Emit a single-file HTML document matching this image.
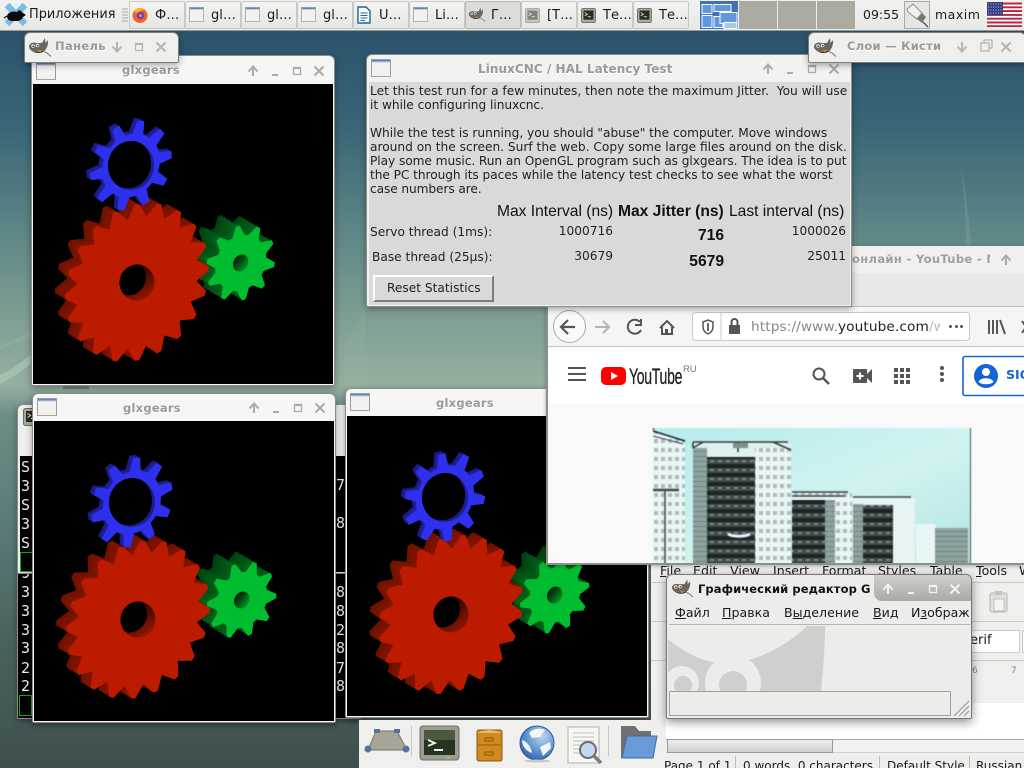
<!DOCTYPE html>
<html><head><meta charset="utf-8"><title>Desktop</title>
<style>
html,body{margin:0;padding:0}
body{width:1024px;height:768px;overflow:hidden;position:relative;font-family:"DejaVu Sans","Noto Sans CJK SC",sans-serif;font-size:12px;color:#1a1a1a;
background:linear-gradient(180deg,#27485f 0,#2c556d 40px,#3a6677 130px,#5d8686 230px,#7f9f94 320px,#95b09f 385px,#6b8e88 415px,#5a7c78 520px,#49625f 640px,#3e504d 768px)}
div,svg,span{position:absolute;box-sizing:border-box}
span{white-space:pre}
.win{background:#efefed;border:1px solid #8d8d8a;border-radius:6px 6px 2px 2px;box-shadow:0 2px 7px rgba(0,0,0,.35)}
.ttl{font-weight:bold;color:#9a9a98;font-size:11.5px;line-height:14px;letter-spacing:.25px;text-shadow:0 1px 0 #fff}
.cv{background:#000}
.task{top:1px;height:28px;width:56px;background:linear-gradient(#f4f4f2,#e6e6e3);border:1px solid #c8c8c4;border-radius:2px;font-size:13px;line-height:28px}
.task span{left:25px;top:0}
.m{font-size:12.6px;top:0;line-height:16px}
.mono{font-family:"DejaVu Sans Mono","Liberation Mono",monospace;color:#eee;font-size:15px;line-height:16px}
.lt{font-size:12.2px;line-height:14px;color:#222}
.hh{font-family:"Liberation Sans",sans-serif;font-size:15.6px;color:#111;line-height:18px}
u{text-decoration:underline}
.dot{width:3.4px;height:3.4px;border-radius:50%;background:#555;top:79px}
</style></head><body>

<svg style="width:0;height:0;left:0;top:0" viewBox="0 0 1 1">
<defs>
<g id="rf"><circle r="70"/>
<polygon id="rt" points="68.8,-10.9 83,-2.6 83,2.6 68.8,10.9"/>
<use href="#rt" transform="rotate(18)"/><use href="#rt" transform="rotate(36)"/><use href="#rt" transform="rotate(54)"/><use href="#rt" transform="rotate(72)"/><use href="#rt" transform="rotate(90)"/><use href="#rt" transform="rotate(108)"/><use href="#rt" transform="rotate(126)"/><use href="#rt" transform="rotate(144)"/><use href="#rt" transform="rotate(162)"/><use href="#rt" transform="rotate(180)"/><use href="#rt" transform="rotate(198)"/><use href="#rt" transform="rotate(216)"/><use href="#rt" transform="rotate(234)"/><use href="#rt" transform="rotate(252)"/><use href="#rt" transform="rotate(270)"/><use href="#rt" transform="rotate(288)"/><use href="#rt" transform="rotate(306)"/><use href="#rt" transform="rotate(324)"/><use href="#rt" transform="rotate(342)"/>
</g>
<g id="gf"><circle r="29.5"/>
<polygon id="gt" points="28.5,-7.1 40,-2.4 40,2.4 28.5,7.1"/>
<use href="#gt" transform="rotate(36)"/><use href="#gt" transform="rotate(72)"/><use href="#gt" transform="rotate(108)"/><use href="#gt" transform="rotate(144)"/><use href="#gt" transform="rotate(180)"/><use href="#gt" transform="rotate(216)"/><use href="#gt" transform="rotate(252)"/><use href="#gt" transform="rotate(288)"/><use href="#gt" transform="rotate(324)"/>
</g>
<g id="bf"><circle r="33.5"/>
<polygon id="bt" points="32.7,-6.4 47,-4 47,4 32.7,6.4"/>
<use href="#bt" transform="rotate(36)"/><use href="#bt" transform="rotate(72)"/><use href="#bt" transform="rotate(108)"/><use href="#bt" transform="rotate(144)"/><use href="#bt" transform="rotate(180)"/><use href="#bt" transform="rotate(216)"/><use href="#bt" transform="rotate(252)"/><use href="#bt" transform="rotate(288)"/><use href="#bt" transform="rotate(324)"/>
</g>
<linearGradient id="rw" x1="0" y1="0" x2="1" y2="1"><stop offset=".2" stop-color="#200400"/><stop offset="1" stop-color="#a81a00"/></linearGradient>
<linearGradient id="gw" x1="0" y1="0" x2="1" y2="1"><stop offset=".15" stop-color="#001a06"/><stop offset="1" stop-color="#00a82a"/></linearGradient>
<clipPath id="rc"><ellipse rx="17.5" ry="18" transform="translate(104,198.5) rotate(14)"/></clipPath>
<clipPath id="gc"><circle r="8.9" transform="translate(207.7,179) matrix(.866 -.171 0 .94 0 0)"/></clipPath>
<clipPath id="bc"><ellipse rx="23" ry="24.500" transform="translate(98,81.5) rotate(6)"/></clipPath>
<g id="gh"><circle r="8.9" fill="url(#gw)" transform="translate(207.7,179) matrix(.866 -.171 0 .94 0 0)"/>
<g clip-path="url(#gc)"><circle r="8.9" fill="#000" transform="translate(194,171) matrix(.866 -.171 0 .94 0 0)"/></g></g>
<g id="rh"><ellipse rx="17.5" ry="18" fill="url(#rw)" transform="translate(104,198.5) rotate(14)"/>
<g clip-path="url(#rc)"><ellipse rx="17.5" ry="18" fill="#000" transform="translate(95.5,193.400) rotate(14)"/></g></g>
<g id="bh"><ellipse rx="23" ry="24.500" fill="#1d1d8e" transform="translate(98,81.5) rotate(6)"/>
<g clip-path="url(#bc)"><ellipse rx="23" ry="24.500" fill="#000" transform="translate(95,79.800) rotate(6)"/></g></g>

<g id="r1" transform="translate(104,198.5) matrix(.866 -.171 0 .94 0 0) rotate(0)"><use href="#rf"/></g>
<g id="g1" transform="translate(207.7,179) matrix(.866 -.171 0 .94 0 0) rotate(13)"><use href="#gf"/></g>
<g id="b1" transform="translate(98,81.5) matrix(.866 -.171 0 .94 0 0) rotate(-3.8)"><use href="#bf"/></g>
<g id="r2" transform="translate(104,198.5) matrix(.866 -.171 0 .94 0 0) rotate(3.7)"><use href="#rf"/></g>
<g id="g2" transform="translate(207.7,179) matrix(.866 -.171 0 .94 0 0) rotate(4.3)"><use href="#gf"/></g>
<g id="b2" transform="translate(98,81.5) matrix(.866 -.171 0 .94 0 0) rotate(-11.4)"><use href="#bf"/></g>
<g id="r3" transform="translate(104,198.5) matrix(.866 -.171 0 .94 0 0) rotate(10)"><use href="#rf"/></g>
<g id="g3" transform="translate(207.7,179) matrix(.866 -.171 0 .94 0 0) rotate(-5)"><use href="#gf"/></g>
<g id="b3" transform="translate(98,81.5) matrix(.866 -.171 0 .94 0 0) rotate(13.6)"><use href="#bf"/></g>

<symbol id="wi" viewBox="0 0 20 20" preserveAspectRatio="none"><rect x=".5" y=".5" width="19" height="19" fill="#f1f1ef" stroke="#9c9c9a"/><rect x="1" y="1" width="18" height="2" fill="#5b86c4"/><rect x="1" y="3" width="18" height="1" fill="#c9d6e8"/></symbol>
<symbol id="gimp" viewBox="0 0 24 20"><path d="M1 10 C1 6 5 5 9 6 L14 6 L17 1 L17.500 6 L20 3 C20.500 9 18 14 14 15 C9 16 2 15 1 10Z" fill="#6b675e"/><path d="M3 13 C7 16 13 16 17 12 L15 15 C11 17 6 16 3 13Z" fill="#2e2b27"/><circle cx="5" cy="9" r="1.700" fill="#eee"/><circle cx="9.500" cy="8.500" r="1.800" fill="#eee"/><circle cx="5.200" cy="9.200" r=".8" fill="#222"/><circle cx="9.700" cy="8.700" r=".8" fill="#222"/><path d="M9 13 L15 13 L12 15.500Z" fill="#c98a30"/><path d="M15 14 L19 16 L23 19.500" fill="none" stroke="#888" stroke-width="1.200"/></symbol>
<symbol id="tm" viewBox="0 0 18 18"><rect x=".5" y=".5" width="17" height="17" rx="2" fill="#a9aaa2" stroke="#6b6c66"/><rect x="3" y="3" width="12" height="11" fill="#23301c"/><path d="M4.5 5.5 L7.5 7.5 L4.5 9.5" fill="none" stroke="#e8e8e8"/><rect x="8" y="10" width="4" height="1" fill="#e8e8e8"/></symbol>

<g id="up"><path d="M-4.5 0.5 L0 -4.5 L4.5 0.5 M0 -4 V5" fill="none" stroke="currentColor" stroke-width="2"/></g>
<g id="dn"><path d="M-4.5 -0.5 L0 4.5 L4.5 -0.5 M0 4 V-5" fill="none" stroke="currentColor" stroke-width="2"/></g>
<g id="mn"><rect x="-3" y="3" width="6" height="2" fill="currentColor"/></g>
<g id="mx"><rect x="-3.5" y="-3.5" width="7" height="7" fill="none" stroke="currentColor" stroke-width="1.3"/><rect x="-3.5" y="-3.5" width="7" height="1.6" fill="currentColor"/></g>
<g id="cl"><path d="M-4.5 -4.5 L4.5 4.5 M4.5 -4.5 L-4.5 4.5" stroke="currentColor" stroke-width="2"/></g>

<pattern id="dkw" width="8" height="9" patternUnits="userSpaceOnUse"><rect width="8" height="9" fill="#414c4b"/><rect width="8" height="4" fill="#1c2322"/><rect x="1" y="5" width="4" height="2" fill="#7b8582"/></pattern>
<pattern id="ltw" width="7" height="9" patternUnits="userSpaceOnUse"><rect width="7" height="9" fill="#e9f6f5"/><rect x="1" y="2" width="4" height="4" fill="#a9bdbb"/></pattern>
<pattern id="gyw" width="8" height="5" patternUnits="userSpaceOnUse"><rect width="8" height="5" fill="#8ea3a0"/><rect y="3" width="8" height="1" fill="#71827f"/></pattern>
<radialGradient id="gl" cx=".65" cy=".3" r=".8"><stop offset="0" stop-color="#bcd6f0"/><stop offset=".6" stop-color="#5a90d0"/><stop offset="1" stop-color="#2f5ea5"/></radialGradient>
</defs></svg>

<!-- wallpaper streaks -->
<svg style="left:0;top:0;width:1024px;height:768px" viewBox="0 0 1024 768">
<path d="M0 375 C15 368 24 360 34 352 L34 362 C24 370 12 378 0 384Z" fill="#b3cdbb" opacity=".55"/>
<path d="M0 345 C12 340 24 336 34 330 L34 335 C22 341 10 346 0 350Z" fill="#a9c6b6" opacity=".2"/>
<path d="M960 160 C964 190 966 220 966 246 L971 246 C969 220 966 190 960 160Z" fill="#a4c0b4" opacity=".2"/>
<rect x="63" y="386" width="26" height="3" fill="#555" opacity=".5"/>
<path d="M345 390 L345 345 L366 306 L366 390Z" fill="#a9c2ab" opacity=".1"/>
</svg>

<!-- terminals -->
<div class="win" style="left:17px;top:404px;width:345px;height:170px;background:#eeeeec">
<svg style="left:5px;top:3px;width:18px;height:18px"><use href="#tm" width="18" height="18"/></svg>
<div style="left:2px;top:51px;width:340px;height:116px;background:#000"></div>
<div style="left:2px;top:147px;width:13px;height:20px;border:1px solid #13a81f"></div>
<span class="mono" style="left:3px;top:54px">S</span><span class="mono" style="left:3px;top:73px">3</span><span class="mono" style="left:3px;top:92px">S</span><span class="mono" style="left:3px;top:111px">3</span><span class="mono" style="left:3px;top:130px">S</span>
<span class="mono" style="left:318px;top:72px">7</span><span class="mono" style="left:318px;top:110px">8</span>
</div>
<div class="win" style="left:17px;top:574px;width:345px;height:145px;background:#000;border-top:0;overflow:hidden;border-radius:0 0 2px 2px">
<div style="left:1px;top:121px;width:13px;height:21px;border:1px solid #13a81f"></div>
<span class="mono" style="left:3px;top:-9px">9</span><span class="mono" style="left:3px;top:10px">3</span><span class="mono" style="left:3px;top:29px">3</span><span class="mono" style="left:3px;top:48px">3</span><span class="mono" style="left:3px;top:66px">3</span><span class="mono" style="left:3px;top:86px">2</span><span class="mono" style="left:3px;top:104px">2</span>
<span class="mono" style="left:318px;top:10px">8</span><span class="mono" style="left:318px;top:29px">8</span><span class="mono" style="left:318px;top:48px">2</span><span class="mono" style="left:318px;top:66px">8</span><span class="mono" style="left:318px;top:86px">7</span><span class="mono" style="left:318px;top:104px">8</span>
</div>

<!-- glxgears 1 -->
<div class="win" style="left:31px;top:55px;width:304px;height:331px;background:#f6f6f4">
<svg style="left:4px;top:6px;width:20px;height:18px"><use href="#wi" width="20" height="18"/></svg>
<span class="ttl" style="left:90px;top:7px">glxgears</span>
<svg style="left:0;top:0;width:304px;height:29px;color:#aaa"><use href="#up" x="221" y="15"/><use href="#mn" x="243" y="15"/><use href="#mx" x="265" y="15"/><use href="#cl" x="287" y="15"/></svg>
<svg class="cv" style="left:1px;top:28px;width:300px;height:300px" viewBox="0 0 300 300">
<use href="#g1" x="-17.8" y="-10.5" fill="#004210"/><use href="#g1" x="-15" y="-8.9" fill="#004a12"/><use href="#g1" x="-12" y="-7.1" fill="#004f13"/><use href="#g1" x="-9" y="-5.3" fill="#005415"/><use href="#g1" x="-6" y="-3.5" fill="#005a16"/><use href="#g1" x="-3" y="-1.8" fill="#006018"/><use href="#g1" fill="#00bd2f"/><use href="#gh"/>
<use href="#r1" x="-10" y="-5.9" fill="#701100"/><use href="#r1" x="-7.500" y="-4.4" fill="#761200"/><use href="#r1" x="-5" y="-3" fill="#7c1200"/><use href="#r1" x="-2.500" y="-1.500" fill="#801300"/><use href="#r1" fill="#bd1b00"/><use href="#rh"/>
<use href="#b1" x="-4" y="-2.400" fill="#1b1b86"/><use href="#b1" x="-2" y="-1.200" fill="#1f1f96"/><use href="#b1" fill="#2f2fee"/><use href="#bh"/>
</svg></div>

<!-- glxgears 3 -->
<div class="win" style="left:345px;top:388px;width:304px;height:330px;background:#f6f6f4">
<svg style="left:4px;top:4px;width:20px;height:18px"><use href="#wi" width="20" height="18"/></svg>
<span class="ttl" style="left:90px;top:7px">glxgears</span>
<svg class="cv" style="left:1px;top:27px;width:300px;height:300px" viewBox="0 0 300 300">
<use href="#g3" x="-17.8" y="-10.5" fill="#004210"/><use href="#g3" x="-15" y="-8.9" fill="#004a12"/><use href="#g3" x="-12" y="-7.1" fill="#004f13"/><use href="#g3" x="-9" y="-5.3" fill="#005415"/><use href="#g3" x="-6" y="-3.5" fill="#005a16"/><use href="#g3" x="-3" y="-1.8" fill="#006018"/><use href="#g3" fill="#00bd2f"/><use href="#gh"/>
<use href="#r3" x="-10" y="-5.9" fill="#701100"/><use href="#r3" x="-7.500" y="-4.4" fill="#761200"/><use href="#r3" x="-5" y="-3" fill="#7c1200"/><use href="#r3" x="-2.500" y="-1.500" fill="#801300"/><use href="#r3" fill="#bd1b00"/><use href="#rh"/>
<use href="#b3" x="-4" y="-2.400" fill="#1b1b86"/><use href="#b3" x="-2" y="-1.200" fill="#1f1f96"/><use href="#b3" fill="#2f2fee"/><use href="#bh"/>
</svg></div>

<!-- glxgears 2 -->
<div class="win" style="left:32px;top:393px;width:304px;height:330px;background:#f6f6f4">
<svg style="left:4px;top:4px;width:20px;height:18px"><use href="#wi" width="20" height="18"/></svg>
<span class="ttl" style="left:90px;top:7px">glxgears</span>
<svg style="left:0;top:0;width:304px;height:29px;color:#aaa"><use href="#up" x="221" y="14"/><use href="#mn" x="243" y="14"/><use href="#mx" x="265" y="14"/><use href="#cl" x="287" y="14"/></svg>
<svg class="cv" style="left:1px;top:27px;width:300px;height:300px" viewBox="0 0 300 300">
<use href="#g2" x="-17.8" y="-10.5" fill="#004210"/><use href="#g2" x="-15" y="-8.9" fill="#004a12"/><use href="#g2" x="-12" y="-7.1" fill="#004f13"/><use href="#g2" x="-9" y="-5.3" fill="#005415"/><use href="#g2" x="-6" y="-3.5" fill="#005a16"/><use href="#g2" x="-3" y="-1.8" fill="#006018"/><use href="#g2" fill="#00bd2f"/><use href="#gh"/>
<use href="#r2" x="-10" y="-5.9" fill="#701100"/><use href="#r2" x="-7.500" y="-4.4" fill="#761200"/><use href="#r2" x="-5" y="-3" fill="#7c1200"/><use href="#r2" x="-2.500" y="-1.500" fill="#801300"/><use href="#r2" fill="#bd1b00"/><use href="#rh"/>
<use href="#b2" x="-4" y="-2.400" fill="#1b1b86"/><use href="#b2" x="-2" y="-1.200" fill="#1f1f96"/><use href="#b2" fill="#2f2fee"/><use href="#bh"/>
</svg></div>

<!-- LibreOffice -->
<div style="left:651px;top:560px;width:373px;height:208px;background:#efefed;overflow:hidden">
<span class="m" style="left:9px;top:3px"><u>F</u>ile</span><span class="m" style="left:42px;top:3px">Edit</span><span class="m" style="left:79px;top:3px">View</span><span class="m" style="left:122px;top:3px">Insert</span><span class="m" style="left:171px;top:3px">Format</span><span class="m" style="left:227px;top:3px">Styles</span><span class="m" style="left:279px;top:3px">Table</span><span class="m" style="left:325px;top:3px"><u>T</u>ools</span><span class="m" style="left:368px;top:3px">W</span>
<div style="left:0;top:22px;width:373px;height:1px;background:#c9c9c6"></div>
<div style="left:0;top:61px;width:373px;height:1px;background:#c9c9c6"></div>
<div style="left:0;top:100px;width:373px;height:1px;background:#c9c9c6"></div>
<div style="left:311px;top:70px;width:58px;height:23px;background:#fff;border:1px solid #ccc"></div>
<div style="left:371px;top:70px;width:10px;height:23px;background:#f6f6f4;border:1px solid #ccc"></div>
<span class="m" style="left:319px;top:73px;font-size:13px">erif</span>
<svg style="left:337px;top:30px;width:30px;height:24px" viewBox="0 0 30 24"><rect x="2" y="3" width="17" height="19" rx="2" fill="#dfdfdc" stroke="#b5b5b2"/><rect x="7" y="1" width="7" height="4" fill="#c4c4c0"/><rect x="6" y="9" width="10" height="12" fill="#f4f4f2" stroke="#c0c0bd"/></svg>
<div style="left:0;top:101px;width:373px;height:42px;background:#efefed"></div>
<span style="left:321px;top:106px;font-size:9px;color:#888">6</span><span style="left:360px;top:106px;font-size:9px;color:#888">7</span>
<div style="left:15px;top:143px;width:358px;height:36px;background:#fff"></div>
<div style="left:15px;top:179px;width:358px;height:14px;background:#f1f1ef;border-top:1px solid #a8a8a5;border-bottom:1px solid #cfcfcc"></div>
<div style="left:16px;top:179px;width:166px;height:14px;background:linear-gradient(#eee,#cfcfcc);border:1px solid #999"></div>
<div style="left:0;top:195px;width:373px;height:13px;background:#eeeeec"></div>
<span class="m" style="left:13px;top:198px;font-size:12px">Page 1 of 1</span><span class="m" style="left:92px;top:198px;font-size:12px">0 words, 0 characters</span><span class="m" style="left:236px;top:198px;font-size:12px">Default Style</span><span class="m" style="left:325px;top:198px;font-size:12px">Russian</span>
<div style="left:84px;top:196px;width:1px;height:12px;background:#bbb"></div><div style="left:228px;top:196px;width:1px;height:12px;background:#bbb"></div><div style="left:318px;top:196px;width:1px;height:12px;background:#bbb"></div>
</div>

<!-- Firefox -->
<div style="left:546px;top:246px;width:478px;height:319px;background:#f9f9f9;border-left:2px solid #8d8d8a;border-bottom:2px solid #8d8d8a;overflow:hidden;box-shadow:0 1px 4px rgba(0,0,0,.3)">
<div style="left:0;top:0;width:478px;height:27px;background:#f0f0ee"></div>
<span class="ttl" style="left:304px;top:6px;color:#a0a09e;font-size:11.5px;letter-spacing:.35px;width:138px;overflow:hidden;display:block;text-shadow:none">онлайн - YouTube - Mozilla</span>
<svg style="left:450px;top:6px;width:16px;height:16px;color:#aaa"><use href="#up" x="8" y="8"/></svg>
<div style="left:0;top:27px;width:478px;height:33px;background:#e8e8e7"></div>
<div style="left:0;top:60px;width:478px;height:1px;background:#bdbdbb"></div>
<div style="left:0;top:61px;width:478px;height:40px;background:#f5f5f5;border-bottom:1px solid #c7c7c7"></div>
<div style="left:5px;top:64px;width:33px;height:33px;border:1px solid #aaa;border-radius:50%;background:#fafafa"></div>
<svg style="left:0;top:61px;width:478px;height:40px" viewBox="0 0 478 40" fill="none" stroke="#555" stroke-width="2">
<path d="M13 20 H27 M20 13 L13 20 L20 27" stroke-width="2.2"/>
<path d="M47 20 H61 M55 14 L61 20 L55 26" stroke="#b5b5b5" stroke-width="2"/>
<path d="M92 15 A7 7 0 1 0 93 23 M93 12 V18 H87"/>
<path d="M112 21 L119 14 L126 21 M114 20 V27 H124 V20" stroke-width="2"/><rect x="117" y="22" width="3" height="5" fill="#555" stroke="none"/>
<rect x="144.5" y="5.5" width="277" height="28" rx="3" fill="#fff" stroke="#c9c9c9" stroke-width="1"/>
<path d="M155 15 L160 13 L165 15 V20 C165 24 162 26 160 27 C158 26 155 24 155 20Z" stroke-width="1.5"/><path d="M160 16 V24" stroke-width="1.8"/>
<path d="M173 6 V33" stroke="#ccc" stroke-width="1"/>
<rect x="181" y="18" width="11" height="9" fill="#555" stroke="none"/><path d="M183.5 18 V15 A3 3 0 0 1 189.5 15 V18"/>
<path d="M441 13 V27 M445 13 V27 M449 13 V27 M452 13 L457 27"/>
<path d="M474 14 L482 26 M482 14 L474 26"/>
</svg>
<span style="left:203px;top:71px;font-size:13.7px;line-height:20px;color:#888;letter-spacing:.1px">https://www.<b style="font-weight:normal;color:#222">youtube.com</b><b style="font-weight:normal;color:#bbb">/w</b></span>
<div style="left:392px;top:68px;width:26px;height:24px;background:#fff"></div>
<div class="dot" style="left:401px"></div><div class="dot" style="left:406.500px"></div><div class="dot" style="left:412px"></div>
<div style="left:0;top:102px;width:478px;height:56px;background:#fff"></div>
<svg style="left:0;top:102px;width:478px;height:56px" viewBox="0 0 478 56">
<path d="M20 20 H38 M20 26 H38 M20 32 H38" stroke="#555" stroke-width="2"/>
<rect x="53" y="19" width="25" height="18" rx="5" fill="#f00"/><path d="M63 24 L70 28 L63 32Z" fill="#fff"/>
<circle cx="271" cy="26" r="5.5" fill="none" stroke="#555" stroke-width="2"/><path d="M275 30 L281 36" stroke="#555" stroke-width="2.4"/>
<rect x="305" y="21" width="14" height="14" rx="1" fill="#555"/><path d="M319 26 L324 21 V35 L319 30Z" fill="#555"/><path d="M312 24.5 V31.5 M308.5 28 H315.5" stroke="#fff" stroke-width="2"/>
<path d="M346 20h4v4h-4zM352 20h4v4h-4zM358 20h4v4h-4zM346 26h4v4h-4zM352 26h4v4h-4zM358 26h4v4h-4zM346 32h4v4h-4zM352 32h4v4h-4zM358 32h4v4h-4z" fill="#555"/>
<circle cx="394" cy="20" r="2" fill="#555"/><circle cx="394" cy="26" r="2" fill="#555"/><circle cx="394" cy="32" r="2" fill="#555"/>
<rect x="415" y="8.5" width="80" height="39" rx="2" fill="#fff" stroke="#1266d4" stroke-width="1.6"/>
<circle cx="438" cy="28" r="12" fill="#1266d4"/><circle cx="438" cy="24" r="4" fill="#fff"/><path d="M430.500 34 C432 29 444 29 445.500 34 C442 37 434 37 430.500 34Z" fill="#fff"/>
</svg>
<span style="left:81px;top:118px;font-family:'Liberation Sans',sans-serif;font-size:22px;line-height:26px;color:#222;letter-spacing:-.5px;transform:scaleX(.64);transform-origin:0 0;-webkit-text-stroke:.3px #222">YouTube</span>
<span style="left:135px;top:118px;font-family:'Liberation Sans',sans-serif;font-size:9.5px;line-height:12px;color:#777">RU</span>
<span style="left:458px;top:121px;font-size:12.5px;line-height:16px;color:#1266d4;font-weight:bold">SIG</span>
<svg style="left:105px;top:182px;width:318px;height:136px;filter:blur(.5px)" viewBox="0 0 318 136">
<defs><linearGradient id="sk" x1="0" y1="0" x2="1" y2="1"><stop offset="0" stop-color="#b7ecec"/><stop offset=".55" stop-color="#d0f3f1"/><stop offset="1" stop-color="#b4e4e2"/></linearGradient></defs>
<rect width="318" height="136" fill="url(#sk)"/>
<rect x="0" y="0" width="1" height="136" fill="#223"/><rect x="317" y="0" width="1" height="136" fill="#3a5a5a"/>
<path d="M0 2 L32 12 V136 H0Z" fill="url(#ltw)"/><path d="M0 3 L32 13" stroke="#123" stroke-width="1.5"/><path d="M0 8 L30 16" stroke="#345"/>
<path d="M0 62 H26" stroke="#3c4a49" stroke-width="2.5"/><path d="M12 62 V136" stroke="#3c4a49" stroke-width="1.5"/>
<rect x="40" y="14" width="98" height="122" fill="#dff0ef"/>
<rect x="40" y="20" width="14" height="116" fill="url(#gyw)"/>
<rect x="54" y="29" width="48" height="107" fill="url(#dkw)"/>
<rect x="102" y="20" width="36" height="116" fill="url(#ltw)"/>
<path d="M40 14 H135 M40 14 V20 M85 14 V24 M120 14 L138 22 M50 14 L40 20" stroke="#2e3b3a" stroke-width="1.6" fill="none"/>
<rect x="80" y="15" width="15" height="5" fill="#7f8f8d"/>
<rect x="139" y="65" width="60" height="71" fill="url(#ltw)"/>
<rect x="139" y="72" width="33" height="64" fill="url(#dkw)"/><rect x="172" y="72" width="10" height="64" fill="url(#gyw)"/>
<path d="M139 64 H195 M139 68 H192" stroke="#3a4746" stroke-width="1.5"/>
<rect x="200" y="70" width="62" height="66" fill="#e6f4f3"/>
<rect x="200" y="76" width="10" height="60" fill="url(#gyw)"/><rect x="210" y="77" width="30" height="59" fill="url(#dkw)"/>
<path d="M200 69 H258" stroke="#3a4746" stroke-width="1.6"/>
<rect x="263" y="96" width="20" height="40" fill="#e8f6f5"/><rect x="282" y="100" width="33" height="36" fill="url(#gyw)"/>
<path d="M75 106 C80 109 92 109 97 106" stroke="#eef" stroke-width="3" fill="none"/>
</svg>
</div>

<!-- Latency window -->
<div class="win" style="left:366px;top:54px;width:486px;height:253px;background:#f2f2f0">
<svg style="left:4px;top:4px;width:20px;height:18px"><use href="#wi" width="20" height="18"/></svg>
<span class="ttl" style="left:111px;top:7px;font-size:12px;letter-spacing:.05px">LinuxCNC / HAL Latency Test</span>
<svg style="left:0;top:0;width:484px;height:28px;color:#aaa"><use href="#up" x="401" y="14"/><use href="#mn" x="423" y="14"/><use href="#mx" x="445" y="14"/><use href="#cl" x="467" y="14"/></svg>
<div style="left:2px;top:27px;width:481px;height:223px;background:#d9d9d9"></div>
<span class="lt" style="left:3px;top:29px">Let this test run for a few minutes, then note the maximum Jitter.  You will use</span>
<span class="lt" style="left:3px;top:43px;letter-spacing:-.03px">it while configuring linuxcnc.</span>
<span class="lt" style="left:3px;top:71px;letter-spacing:-.015px">While the test is running, you should "abuse" the computer. Move windows</span>
<span class="lt" style="left:3px;top:85px">around on the screen. Surf the web. Copy some large files around on the disk.</span>
<span class="lt" style="left:3px;top:99px;letter-spacing:-.07px">Play some music. Run an OpenGL program such as glxgears. The idea is to put</span>
<span class="lt" style="left:3px;top:113px;letter-spacing:-.065px">the PC through its paces while the latency test checks to see what the worst</span>
<span class="lt" style="left:3px;top:127px;letter-spacing:-.1px">case numbers are.</span>
<span class="hh" style="left:130px;top:148px">Max Interval (ns)</span>
<span class="hh" style="left:251px;top:148px;font-weight:bold">Max Jitter (ns)</span>
<span class="hh" style="left:362px;top:148px">Last interval (ns)</span>
<span class="lt" style="left:3px;top:170px">Servo thread (1ms):</span>
<span class="lt" style="left:5px;top:195px">Base thread (25µs):</span>
<span class="lt" style="right:238px;top:169px">1000716</span><span class="lt" style="right:238px;top:194px">30679</span>
<span class="lt" style="right:5px;top:169px">1000026</span><span class="lt" style="right:5px;top:194px">25011</span>
<span class="hh" style="right:127px;top:172px;font-weight:bold">716</span><span class="hh" style="right:127px;top:198px;font-weight:bold">5679</span>
<div style="left:6px;top:220px;width:121px;height:27px;background:#d9d9d9;border:2px solid;border-color:#fff #7d7d7d #7d7d7d #fff"></div>
<span class="lt" style="left:20px;top:226px">Reset Statistics</span>
</div>

<!-- Dock -->
<div style="left:359px;top:720px;width:306px;height:48px;background:#efefed"></div>
<svg style="left:359px;top:720px;width:306px;height:48px" viewBox="0 0 306 48">
<path d="M11 5 H32 L42 24 H3Z" transform="translate(6,6)" fill="#a7a596" stroke="#767468"/>
<circle cx="9" cy="29" r="3.5" fill="#5672a5"/><circle cx="47" cy="29" r="3.5" fill="#5672a5"/><rect x="15" y="9" width="6" height="4" fill="#5672a5"/><rect x="35" y="9" width="6" height="4" fill="#5672a5"/>
<path d="M52.500 6 V36" stroke="#c6c6c3"/>
<rect x="61" y="6" width="39" height="34" rx="3" fill="#9b9c94" stroke="#6d6e68"/><rect x="65" y="10" width="31" height="25" fill="#26331e"/><rect x="65" y="10" width="31" height="10" fill="#4b5a3c"/>
<path d="M69 20 L76 23 L69 26" fill="none" stroke="#eee" stroke-width="1.8"/><rect x="75" y="29" width="9" height="2" fill="#eee"/><rect x="88" y="37" width="3" height="2" fill="#9c5"/>
<rect x="118" y="10" width="25" height="31" rx="2" fill="#d08a1e" stroke="#8a5a12"/><path d="M118 13 Q130 7 143 13" fill="#e8b668"/><path d="M119 25 H142" stroke="#8a5a12"/><rect x="126" y="18" width="8" height="3" fill="none" stroke="#8a5a12"/><rect x="126" y="32" width="8" height="3" fill="none" stroke="#8a5a12"/>
<circle cx="178" cy="23" r="17" fill="url(#gl)" stroke="#2d568f"/><path d="M170 13 C174 8 182 8 186 10 L181 17 L173 18Z M181 27 L191 22 L192 28 L184 36Z" fill="#f3f5f7"/><path d="M163 20 C167 21 172 26 173 33 C167 31 163 26 163 20Z" fill="#eef1f4"/><ellipse cx="178" cy="41" rx="13" ry="1.500" fill="#c8c8c4"/>
<rect x="209" y="7" width="31" height="36" fill="#f6f6f4" stroke="#b0b0ad"/><path d="M214 13 H235 M214 17 H235 M214 21 H235 M214 25 H228 M214 29 H224 M214 33 H224" stroke="#c0c0bd"/>
<circle cx="229" cy="30" r="8" fill="#c4d8ef" stroke="#6c6c6a" stroke-width="2"/><path d="M235 36 L242 43" stroke="#7c7c78" stroke-width="3.500"/>
<path d="M249.500 6 V36" stroke="#c6c6c3"/>
<path d="M262 6 H276 L280 11 H292 V20 H268 L265 38 H262Z" fill="#707070"/><path d="M268 16 H298 L294 38 H263Z" fill="#6a9ad8" stroke="#3e6da6"/>
</svg>

<!-- GIMP main window -->
<div class="win" style="left:666px;top:574px;width:306px;height:145px;background:#ececea;overflow:hidden;box-shadow:0 3px 10px rgba(0,0,0,.45);border-color:#777">
<div style="left:207px;top:0;width:98px;height:26px;background:linear-gradient(#cfcfcc,#a9a9a6);border-radius:0 0 0 8px"></div>
<svg style="left:4px;top:3px;width:23px;height:20px"><use href="#gimp" width="23" height="20"/></svg>
<span style="left:31px;top:6px;font-weight:bold;font-size:11.5px;line-height:16px;color:#111;letter-spacing:.1px">Графический редактор G</span>
<svg style="left:207px;top:0;width:98px;height:26px;color:#f2f2f0"><use href="#up" x="14" y="14"/><use href="#mn" x="37" y="14"/><use href="#mx" x="59" y="14"/><use href="#cl" x="81" y="14"/></svg>
<span class="m" style="left:8px;top:30px"><u>Ф</u>айл</span><span class="m" style="left:55px;top:30px"><u>П</u>равка</span><span class="m" style="left:117px;top:30px">В<u>ы</u>деление</span><span class="m" style="left:206px;top:30px"><u>В</u>ид</span><span class="m" style="left:244px;top:30px">И<u>з</u>ображ</span>
<div style="left:2px;top:49px;width:301px;height:1px;background:#b5b5b2"></div>
<svg style="left:1px;top:50px;width:300px;height:66px" viewBox="0 0 300 66">
<path d="M0 14 C20 30 40 40 62 38 C95 36 125 15 139 1 H157 C157 25 155 45 153 66 H0Z" fill="#cfcfcd"/>
<circle cx="14" cy="58" r="17" fill="#ececea"/><circle cx="65" cy="58" r="28" fill="#ececea"/><circle cx="15" cy="60" r="9" fill="#cfcfcd"/><circle cx="65" cy="60" r="14" fill="#cfcfcd"/>
</svg>
<div style="left:2px;top:116px;width:282px;height:25px;background:#ececea;border:1px solid #9f9f9c;border-radius:1px"></div>
<svg style="left:284px;top:122px;width:20px;height:20px" viewBox="0 0 20 20"><path d="M3 19 L18 4 M8 19 L18 9 M13 19 L18 14" stroke="#999" stroke-width="1.2"/></svg>
</div>

<!-- GIMP small windows -->
<div class="win" style="left:24px;top:32px;width:155px;height:31px;border-radius:6px 6px 2px 2px;border-color:#7e7e7b">
<svg style="left:3px;top:4px;width:24px;height:20px"><use href="#gimp" width="24" height="20"/></svg>
<span class="ttl" style="left:30px;top:6px;letter-spacing:.35px">Панель</span>
<svg style="left:0;top:0;width:155px;height:30px;color:#b5b5b3"><use href="#dn" x="92" y="14"/><use href="#mx" x="114" y="14"/><use href="#cl" x="136" y="14"/></svg>
</div>
<div class="win" style="left:808px;top:32px;width:218px;height:31px;border-color:#7e7e7b">
<svg style="left:4px;top:4px;width:24px;height:20px"><use href="#gimp" width="24" height="20"/></svg>
<span class="ttl" style="left:38px;top:6px;letter-spacing:.25px">Слои — Кисти</span>
<svg style="left:0;top:0;width:216px;height:30px;color:#b5b5b3"><use href="#dn" x="153" y="14"/>
<path d="M172 10 h8 v8 h-8z M175 10 V7 h8 v8 h-3" transform="translate(0,0)" fill="none" stroke="currentColor" stroke-width="1.3"/><use href="#cl" x="197" y="14"/></svg>
</div>

<!-- Top panel -->
<div style="left:0;top:0;width:1024px;height:31px;background:linear-gradient(#f2f2f0,#e8e8e5);border-bottom:1px solid #9a9a97"></div>
<svg style="left:3px;top:2px;width:26px;height:26px" viewBox="0 0 26 26">
<path d="M4 3 L22 22 M22 3 L4 22" stroke="#7cbce8" stroke-width="6.500" fill="none"/>
<path d="M4 14 C5 10 10 9 14 10 L16 8 L18 9 L20 11 L23 13 L20 15 C19 17 17 19 14 19 H9 C6 19 4 17 4 14Z" fill="#0a0a0a"/><path d="M4 14 L1 16" stroke="#0a0a0a" stroke-width="1.200"/>
</svg>
<span style="left:29px;top:6px;font-size:12.9px;line-height:17px">Приложения</span>
<svg style="left:122px;top:8px;width:6px;height:14px"><path d="M0 1 H6 M0 4 H6 M0 7 H6 M0 10 H6 M0 13 H6" stroke="#aaa"/></svg>

<div class="task" style="left:129px"><span>Ф…</span>
<svg style="left:2px;top:5px;width:16px;height:16px" viewBox="0 0 16 16"><circle cx="8" cy="8.500" r="7.500" fill="#f0622a"/><path d="M2 4 C5 0 11 0 14 4 C12 2 10 3 9 4 L4 6Z" fill="#ffb21e"/><circle cx="8.500" cy="8.500" r="3.800" fill="#6c3cc4"/><circle cx="8.500" cy="8.500" r="1.500" fill="#e8913a"/></svg></div>
<div class="task" style="left:185px"><span>gl…</span><svg style="left:3px;top:5px;width:15px;height:15px"><use href="#wi" width="15" height="15"/></svg></div>
<div class="task" style="left:241px"><span>gl…</span><svg style="left:3px;top:5px;width:15px;height:15px"><use href="#wi" width="15" height="15"/></svg></div>
<div class="task" style="left:297px"><span>gl…</span><svg style="left:3px;top:5px;width:15px;height:15px"><use href="#wi" width="15" height="15"/></svg></div>
<div class="task" style="left:353px"><span>U…</span><svg style="left:3px;top:4px;width:14px;height:18px" viewBox="0 0 14 18"><path d="M1 1 H9 L13 5 V17 H1Z" fill="#fff" stroke="#17659b" stroke-width="1.400"/><path d="M3.500 7 H10.500 M3.500 9.500 H10.500 M3.500 12 H10.500 M3.500 14.500 H8" stroke="#17659b"/></svg></div>
<div class="task" style="left:409px"><span>Li…</span><svg style="left:3px;top:5px;width:15px;height:15px"><use href="#wi" width="15" height="15"/></svg></div>
<div class="task" style="left:465px;background:#dcdcd9;border-color:#b9b9b5"><span>Г…</span><svg style="left:2px;top:5px;width:18px;height:15px"><use href="#gimp" width="18" height="15"/></svg></div>
<div class="task" style="left:521px"><span>[T…</span><svg style="left:3px;top:6px;width:15px;height:15px;opacity:.55"><use href="#tm" width="15" height="15"/></svg></div>
<div class="task" style="left:577px"><span>Те…</span><svg style="left:3px;top:6px;width:15px;height:15px"><use href="#tm" width="15" height="15"/></svg></div>
<div class="task" style="left:633px"><span>Те…</span><svg style="left:3px;top:6px;width:15px;height:15px"><use href="#tm" width="15" height="15"/></svg></div>

<svg style="left:700px;top:1px;width:156px;height:28px" viewBox="0 0 156 28">
<rect width="38" height="28" fill="#3f71b4"/>
<g fill="#5f97e0" stroke="#fff"><rect x="2" y="3.500" width="10" height="9"/><rect x="14" y="3.500" width="17" height="7"/><rect x="2" y="14.500" width="10" height="12"/><rect x="14" y="15.500" width="9" height="11"/><rect x="20" y="11.500" width="17" height="11"/><rect x="24" y="21.500" width="13" height="6" fill="#a8c8f0"/></g>
<rect x="39" width="38" height="28" fill="#abaaa1"/><rect x="78" width="38" height="28" fill="#abaaa1"/><rect x="117" width="38" height="28" fill="#abaaa1"/>
</svg>
<span style="left:863px;top:6px;font-size:12.5px;line-height:17px">09:55</span>
<div style="left:904px;top:1px;width:26px;height:28px;border:1px solid #a9a9a6;background:#e6e6e3"></div>
<svg style="left:905px;top:2px;width:24px;height:26px" viewBox="0 0 24 26"><path d="M2 7 L8 2 L17 11 L12 17 L3 10Z" fill="#f1f1ef" stroke="#8d8d8a"/><path d="M12 17 L17 11 L21 15 L17 21Z" fill="#77786f"/><path d="M18 20 L23 25" stroke="#555" stroke-width="1.500"/></svg>
<span style="left:935px;top:6px;font-size:12.5px;line-height:17px;letter-spacing:.5px">maxim</span>
<svg style="left:987px;top:2px;width:35px;height:25px" viewBox="0 0 35 25">
<rect width="35" height="25" fill="#fff"/>
<path d="M0 1.500 H35 M0 5.300 H35 M0 9.100 H35 M0 12.900 H35 M0 16.700 H35 M0 20.500 H35 M0 24.200 H35" stroke="#c0203a" stroke-width="1.900"/>
<rect width="16" height="13.500" fill="#2f3f7f"/>
<path d="M1 2h14M1 5h14M1 8h14M1 11h14" stroke="#bfc6de" stroke-width="1" stroke-dasharray="1 1.500"/>
</svg>
</body></html>
